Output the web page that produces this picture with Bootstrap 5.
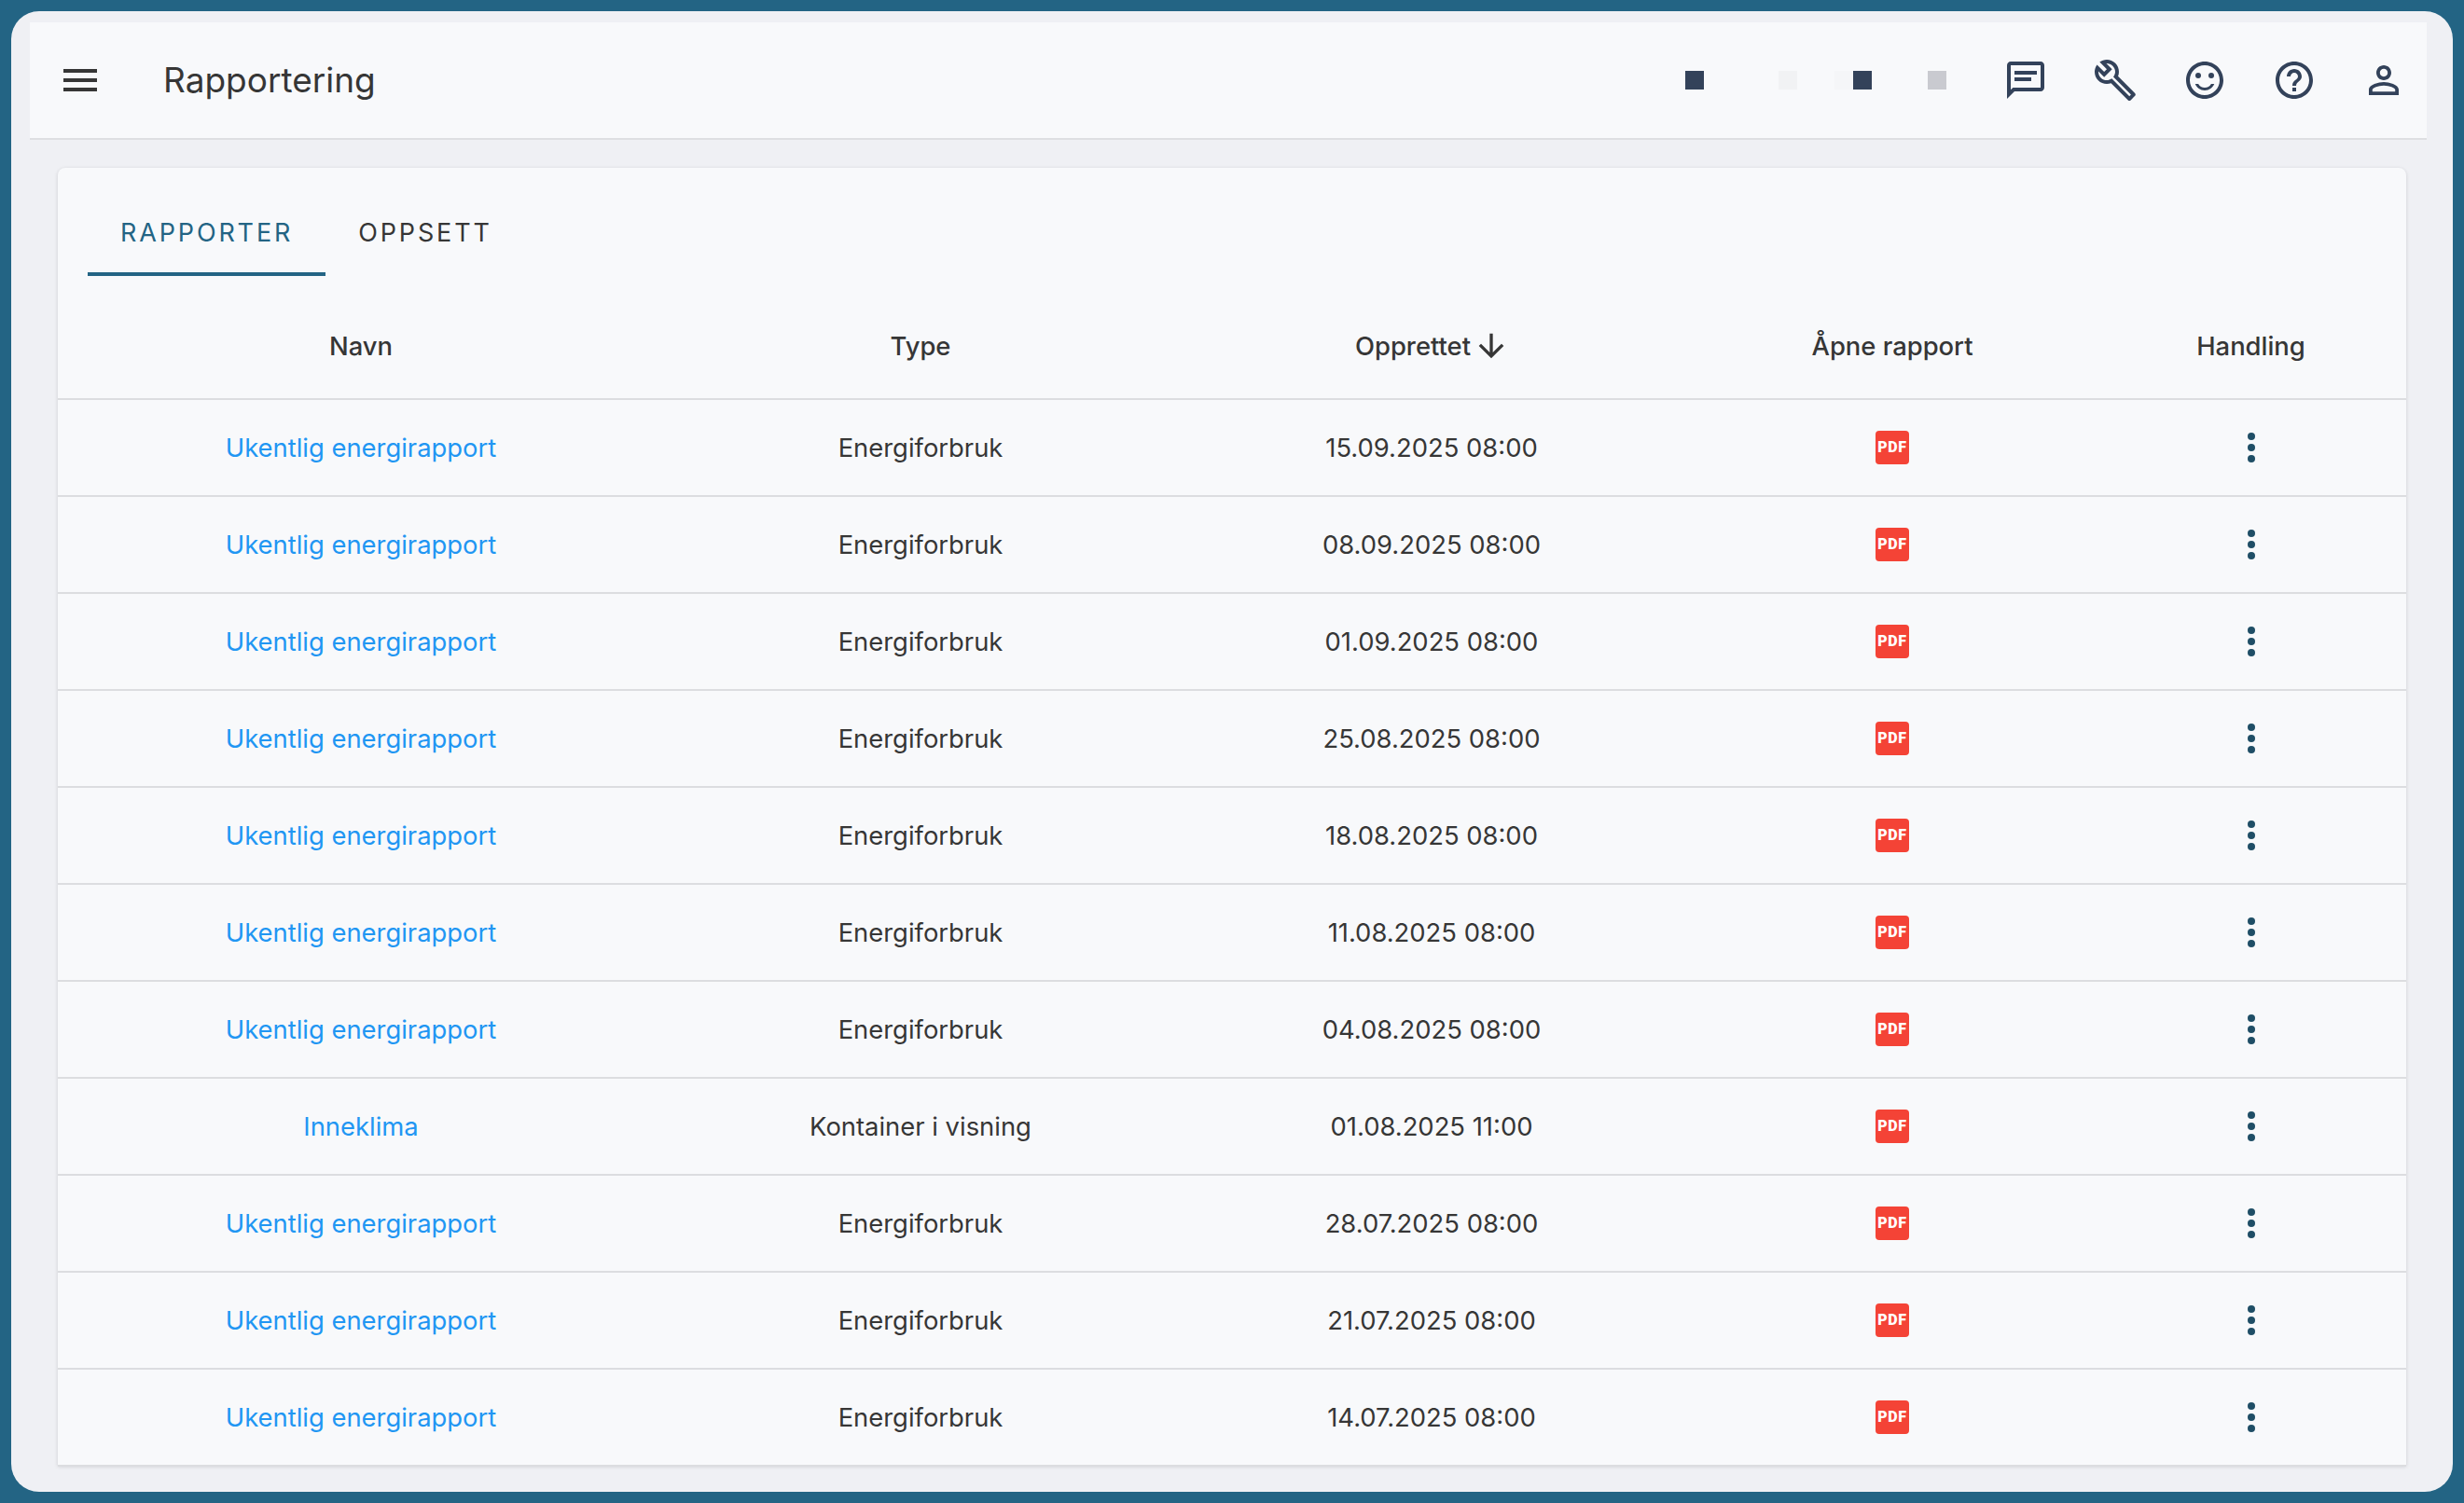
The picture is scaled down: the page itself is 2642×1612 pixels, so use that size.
<!DOCTYPE html>
<html lang="no">
<head>
    <meta charset="UTF-8">
    <title>Rapportering</title>
    <link href="https://cdn.jsdelivr.net/npm/bootstrap@5.3.0/dist/css/bootstrap.min.css" rel="stylesheet">
    <style>
        html, body { height: 100%; }
        body { background: #236484; font-family: Inter, "Liberation Sans", sans-serif; color: #363636; overflow: hidden; padding: 12px; }
        .app-panel { height: 1588px; background: #eff0f4; border-radius: 30px; padding: 12px 28px 0 20px; overflow: hidden; }
        .app-bar { height: 126px; background: #f8f9fb; border-bottom: 2px solid #dedfe2; padding: 0 22px 0 30px; }
        .app-title { font-size: 37px; font-weight: 400; margin: 0 0 0 65px; color: #363636; }
        .bar-icons { gap: 48px; }
        .bar-icons svg { width: 48px; height: 48px; fill: #33425a; display: block; }
        .menu-icon { width: 48px; height: 48px; fill: #363636; display: block; }
        .sq { width: 20px; height: 20px; flex: none; }
        .sq-dark { background: #33425a; }
        .sq-pale { background: #f1f2f4; margin-left: 80px; }
        .sq-faint { background: #f5f6f8; margin-left: 40px; }
        .sq-grey { background: #c9cad0; margin-left: 60px; }
        .sq-row { margin-right: 61px; }
        .report-card { margin: 30px 22px 0 30px; background: #f8f9fb; border-radius: 8px 8px 0 0; box-shadow: 0 1px 4px rgba(0,0,0,.14); padding-top: 24px; height: 1392px; }
        .report-tabs { padding-left: 32px; margin-bottom: 19px; }
        .report-tabs .nav-link { height: 92px; padding: 4px 35px 0; font-size: 27px; font-weight: 400; letter-spacing: 2.85px; color: #363636; border: 0; border-radius: 0; display: flex; align-items: center; border-bottom: 4px solid transparent; }
        .report-tabs .nav-link.active { color: #236484; border-bottom-color: #236484; background: none; }
        .report-table { --bs-table-bg: transparent; table-layout: fixed; width: 2518px; font-size: 27.4px; }
        .report-table th, .report-table td { padding: 0; border-bottom: 2px solid #dcdde0; color: #363636; }
        .report-table th { height: 113px; padding-top: 2px; font-weight: 500; vertical-align: middle; }
        .report-table td { height: 104px; padding-top: 1px; font-weight: 400; vertical-align: middle; }
        .report-table th:last-child, .report-table td:last-child { padding-right: 3px; }
        .report-table .report-link { color: #2196f3; text-decoration: none; }
        .c-name { width: 650px; }
        .c-type { width: 550px; }
        .c-date { width: 546px; }
        .c-open { width: 442px; }
        .c-act { width: 330px; }
        .pdf-icon { width: 36px; height: 36px; margin-top: -4px; background: #f44336; border-radius: 4px; color: #fff; font-family: Roboto, "Liberation Sans", sans-serif; font-weight: 900; font-size: 16px; letter-spacing: .6px; }
        .dots { width: 48px; height: 48px; margin-top: -1px; fill: #1f4e66; }
        .sort-arrow { width: 40px; height: 40px; margin-left: 2px; margin-right: -2px; fill: #363636; vertical-align: -10px; }
    </style>
</head>
<body>

<div class="app-panel">
    <header class="app-bar d-flex align-items-center">
        <svg class="menu-icon" viewBox="0 0 24 24"><path d="M3 18h18v-2H3v2zm0-5h18v-2H3v2zm0-7v2h18V6H3z"/></svg>
        <h1 class="app-title">Rapportering</h1>
        <div class="ms-auto d-flex align-items-center">
            <div class="d-flex sq-row">
                <span class="sq sq-dark"></span>
                <span class="sq sq-pale"></span>
                <span class="sq sq-faint"></span>
                <span class="sq sq-dark"></span>
                <span class="sq sq-grey"></span>
            </div>
            <div class="d-flex bar-icons">
                <svg viewBox="0 0 24 24"><path d="M20 2H4c-1.1 0-2 .9-2 2v18l4-4h14c1.1 0 2-.9 2-2V4c0-1.1-.9-2-2-2zm0 14H5.17L4 17.17V4h16v12zM6 7h12v2H6zm0 3.5h9v2H6z"/></svg>
                <svg viewBox="0 0 24 24"><path d="M22.61 18.99l-9.08-9.08c.93-2.34.45-5.1-1.44-7C9.79.61 6.21.4 3.66 2.26L7.5 6.11 6.08 7.52 2.25 3.69C.39 6.23.6 9.82 2.9 12.11c1.86 1.86 4.57 2.35 6.89 1.48l9.11 9.11c.39.39 1.02.39 1.41 0l2.3-2.3c.4-.38.4-1.01 0-1.41zm-3 1.6l-9.46-9.46c-.61.45-1.29.72-2 .82-1.36.2-2.79-.21-3.83-1.25C3.37 9.76 2.93 8.5 3 7.26l3.09 3.09 4.24-4.24-3.09-3.09c1.24-.07 2.49.37 3.44 1.31 1.08 1.08 1.49 2.57 1.24 3.96-.13.71-.43 1.37-.9 1.96l9.45 9.45-.87.88z"/></svg>
                <svg viewBox="0 0 24 24"><circle cx="15.5" cy="9.5" r="1.5"/><circle cx="8.5" cy="9.5" r="1.5"/><path d="M11.99 2C6.47 2 2 6.48 2 12s4.47 10 9.99 10C17.52 22 22 17.52 22 12S17.52 2 11.99 2zM12 20c-4.42 0-8-3.58-8-8s3.58-8 8-8 8 3.58 8 8-3.58 8-8 8zm0-2.5c2.33 0 4.32-1.45 5.12-3.5h-1.67c-.69 1.19-1.97 2-3.45 2s-2.75-.81-3.45-2H6.88c.8 2.05 2.79 3.5 5.12 3.5z"/></svg>
                <svg viewBox="0 0 24 24"><path d="M11 18h2v-2h-2v2zm1-16C6.48 2 2 6.48 2 12s4.48 10 10 10 10-4.48 10-10S17.52 2 12 2zm0 18c-4.41 0-8-3.59-8-8s3.59-8 8-8 8 3.59 8 8-3.59 8-8 8zm0-14c-2.21 0-4 1.79-4 4h2c0-1.1.9-2 2-2s2 .9 2 2c0 2-3 1.75-3 5h2c0-2.25 3-2.5 3-5 0-2.21-1.79-4-4-4z"/></svg>
                <svg viewBox="0 0 24 24"><path d="M12 5.9c1.16 0 2.1.94 2.1 2.1s-.94 2.1-2.1 2.1S9.9 9.16 9.9 8s.94-2.1 2.1-2.1m0 9c2.97 0 6.1 1.46 6.1 2.1v1.1H5.9V17c0-.64 3.13-2.1 6.1-2.1M12 4C9.79 4 8 5.79 8 8s1.79 4 4 4 4-1.79 4-4-1.79-4-4-4zm0 9c-2.67 0-8 1.34-8 4v3h16v-3c0-2.66-5.33-4-8-4z"/></svg>
            </div>
        </div>
    </header>

    <main class="report-card">
        <ul class="nav report-tabs">
            <li class="nav-item"><a class="nav-link active" href="#">RAPPORTER</a></li>
            <li class="nav-item"><a class="nav-link" href="#">OPPSETT</a></li>
        </ul>
        <table class="table report-table text-center mb-0">
            <colgroup>
                <col class="c-name"><col class="c-type"><col class="c-date"><col class="c-open"><col class="c-act">
            </colgroup>
            <thead>
                <tr>
                    <th>Navn</th>
                    <th>Type</th>
                    <th>Opprettet<svg class="sort-arrow" viewBox="0 0 24 24"><path d="M20 12l-1.41-1.41L13 16.17V4h-2v12.17l-5.58-5.59L4 12l8 8 8-8z"/></svg></th>
                    <th>Åpne rapport</th>
                    <th>Handling</th>
                </tr>
            </thead>
            <tbody id="report-rows"></tbody>
        </table>
    </main>
</div>

<script src="https://cdn.jsdelivr.net/npm/bootstrap@5.3.0/dist/js/bootstrap.bundle.min.js"></script>
<script>
    const weekly = ['Ukentlig energirapport', 'Energiforbruk'];
    const reports = [
        [...weekly, '15.09.2025 08:00'],
        [...weekly, '08.09.2025 08:00'],
        [...weekly, '01.09.2025 08:00'],
        [...weekly, '25.08.2025 08:00'],
        [...weekly, '18.08.2025 08:00'],
        [...weekly, '11.08.2025 08:00'],
        [...weekly, '04.08.2025 08:00'],
        ['Inneklima', 'Kontainer i visning', '01.08.2025 11:00'],
        [...weekly, '28.07.2025 08:00'],
        [...weekly, '21.07.2025 08:00'],
        [...weekly, '14.07.2025 08:00']
    ];

    document.getElementById('report-rows').innerHTML = reports.map(([name, type, created]) => `<tr>
        <td><a class="report-link" href="#">${name}</a></td>
        <td>${type}</td>
        <td>${created}</td>
        <td><span class="pdf-icon d-inline-flex align-items-center justify-content-center align-middle">PDF</span></td>
        <td><svg class="dots" viewBox="0 0 24 24"><circle cx="12" cy="6" r="2"/><circle cx="12" cy="12" r="2"/><circle cx="12" cy="18" r="2"/></svg></td>
    </tr>`).join('');
</script>
</body>
</html>
